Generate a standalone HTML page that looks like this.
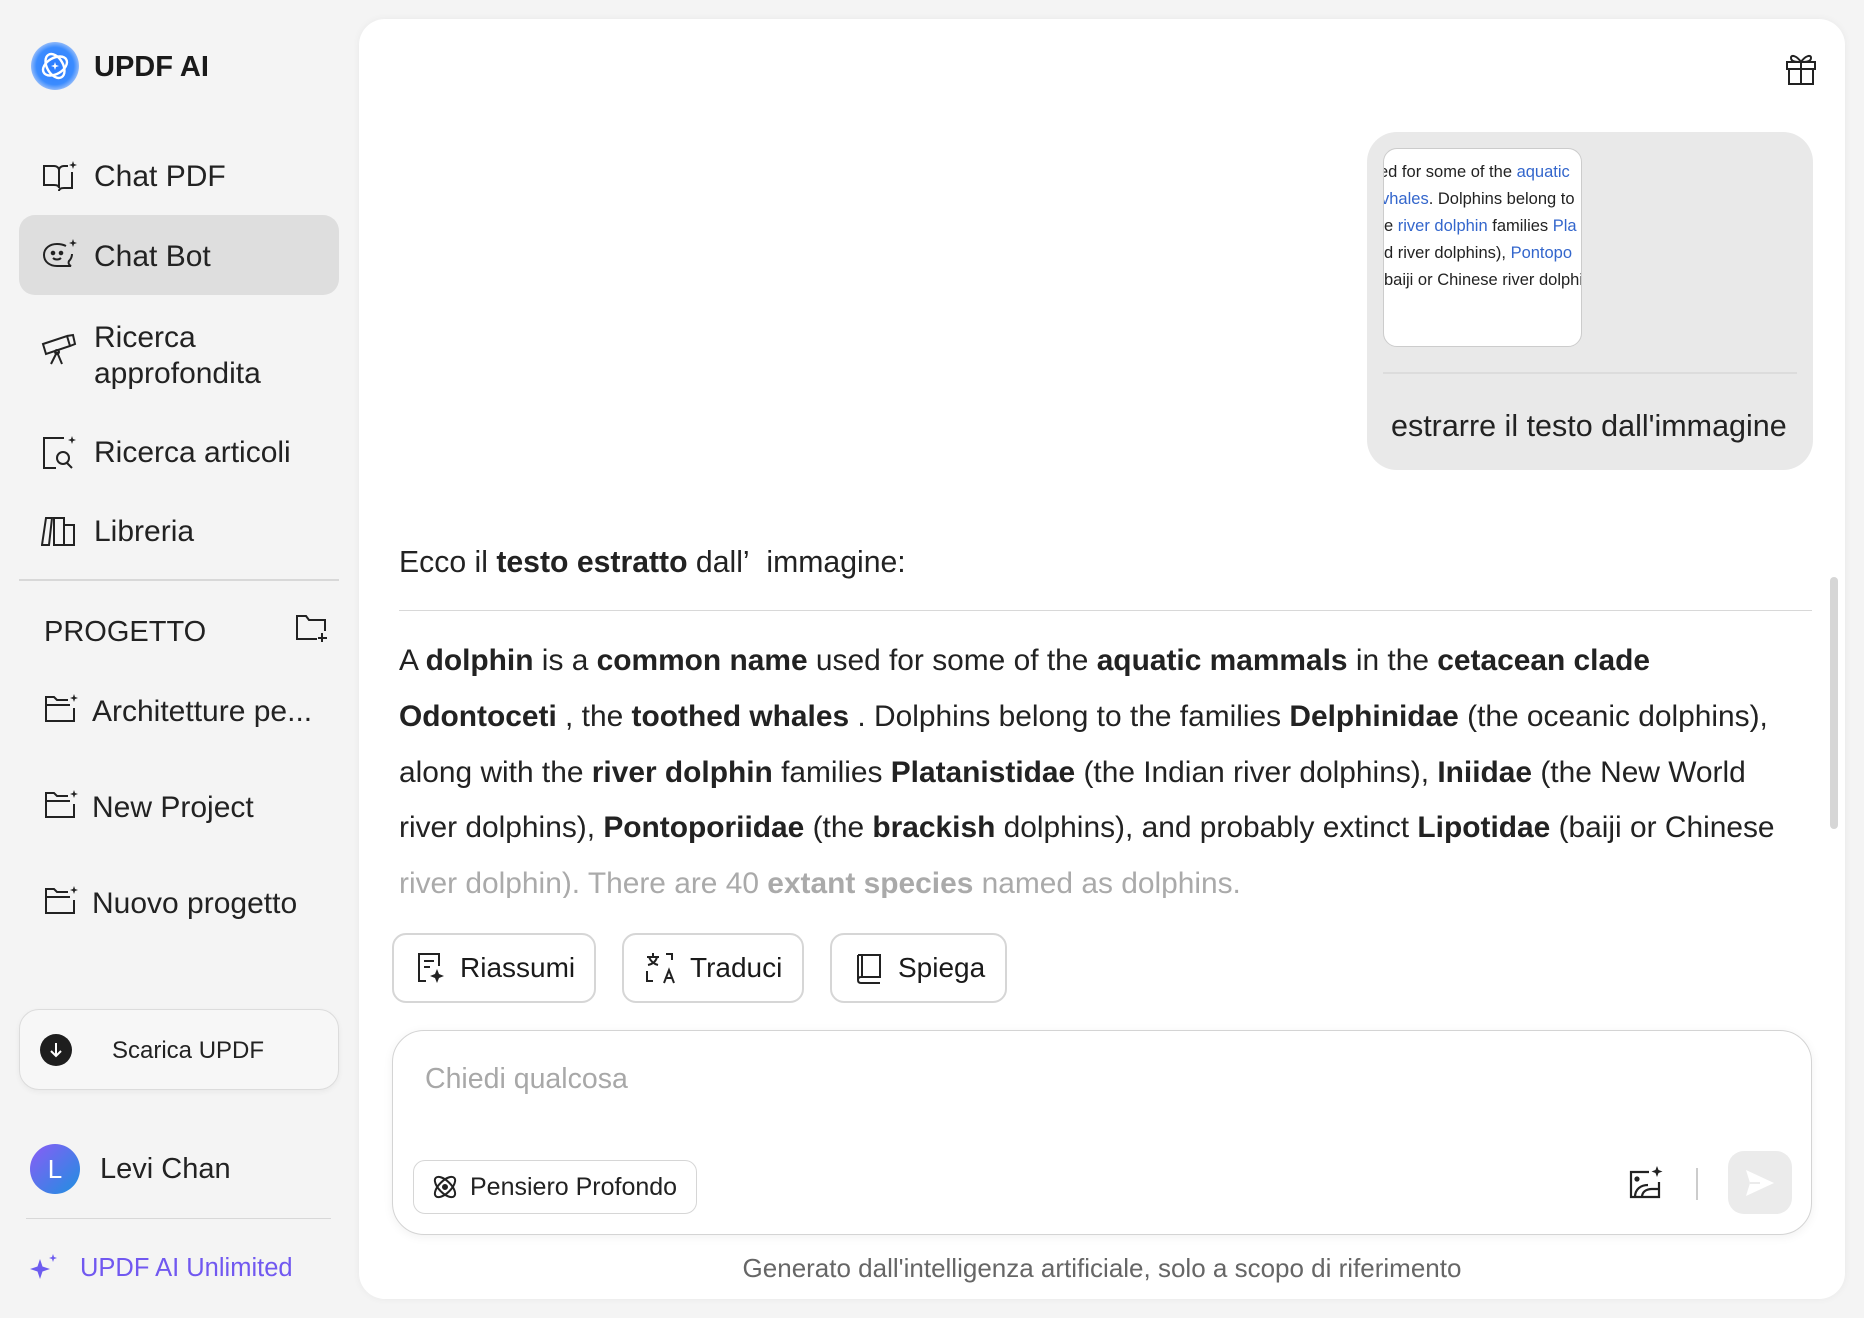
<!DOCTYPE html>
<html><head><meta charset="utf-8"><style>
*{box-sizing:border-box;margin:0;padding:0}
body{width:1864px;height:1318px;background:#f4f4f4;font-family:"Liberation Sans",sans-serif;color:#1a1a1a;position:relative;overflow:hidden}
.a{position:absolute;white-space:nowrap}
.nav{font-size:30px;color:#222}
.ic{position:absolute}
.main{position:absolute;left:359px;top:19px;width:1486px;height:1280px;background:#fff;border-radius:26px;box-shadow:0 0 8px rgba(0,0,0,.05)}
.btn{position:absolute;top:933px;height:70px;border:2px solid #d6d6d6;border-radius:14px;background:#fff;font-size:28px;display:flex;align-items:center;padding-left:20px;gap:12px}
p.t{position:absolute;left:399px;font-size:29.9px;line-height:56px;white-space:nowrap;color:#222}
b{font-weight:700}
</style></head><body>
<!-- logo -->
<div class="ic" style="left:31px;top:42px;width:48px;height:48px;border-radius:50%;background:radial-gradient(circle at 50% 50%,#2a7bff 0,#3b8cff 55%,rgba(80,140,255,.3) 80%,transparent 100%)"></div>
<svg class="ic" style="left:35px;top:46px" width="40" height="40" viewBox="0 0 40 40"><ellipse cx="20" cy="20" rx="13" ry="8" fill="none" stroke="#fff" stroke-width="2.4" transform="rotate(-30 20 20)"/><ellipse cx="20" cy="20" rx="13" ry="8" fill="none" stroke="#fff" stroke-width="2.4" transform="rotate(60 20 20)"/><path d="M20 16 L21 19 L24 20 L21 21 L20 24 L19 21 L16 20 L19 19Z" fill="#fff"/></svg>
<div class="a" style="left:94px;top:51px;font-size:29px;font-weight:700">UPDF AI</div>

<!-- nav -->
<div class="a" style="left:19px;top:215px;width:320px;height:80px;background:#dedede;border-radius:16px"></div>
<svg class="ic" style="left:42px;top:160px" width="36" height="32" viewBox="0 0 36 32" fill="none" stroke="#222" stroke-width="2"><path d="M2 6h10c3 0 5 2 5 4v18c0-2-2-3-5-3H2z M17 10c0-2 2-4 5-4h4 M30 12v16h-8c-3 0-5 1-5 3"/><path d="M31 1l1 3 3 1-3 1-1 3-1-3-3-1 3-1z" fill="#222" stroke="none"/></svg>
<div class="a nav" style="left:94px;top:160px">Chat PDF</div>
<svg class="ic" style="left:42px;top:238px" width="36" height="34" viewBox="0 0 36 34" fill="none" stroke="#222" stroke-width="2"><path d="M24 8c-2-1-5-2-9-2C8 6 2 10 2 17s6 11 13 11h14c-2-1-3-3-2-5 2-2 3-4 3-7"/><circle cx="11" cy="15" r="1.3" fill="#222"/><circle cx="19" cy="15" r="1.3" fill="#222"/><path d="M11 20c2 2 6 2 8 0"/><path d="M31 1l1 3 3 1-3 1-1 3-1-3-3-1 3-1z" fill="#222" stroke="none"/></svg>
<div class="a nav" style="left:94px;top:240px">Chat Bot</div>
<svg class="ic" style="left:40px;top:332px" width="38" height="40" viewBox="0 0 38 40" fill="none" stroke="#222" stroke-width="2"><path d="M3 12l24-8 3 10-24 8z M27 4l6-1 2 9-5 2"/><path d="M17 20l-6 12 M17 20l5 12"/><circle cx="17" cy="20" r="2"/></svg>
<div class="a nav" style="left:94px;top:320px;line-height:36px">Ricerca<br>approfondita</div>
<svg class="ic" style="left:42px;top:434px" width="36" height="36" viewBox="0 0 36 36" fill="none" stroke="#222" stroke-width="2"><path d="M22 4H2v30h12"/><circle cx="21" cy="24" r="6"/><path d="M25 29l5 5"/><path d="M30 2l1 3 3 1-3 1-1 3-1-3-3-1 3-1z" fill="#222" stroke="none"/></svg>
<div class="a nav" style="left:94px;top:436px">Ricerca articoli</div>
<svg class="ic" style="left:41px;top:516px" width="36" height="30" viewBox="0 0 36 30" fill="none" stroke="#222" stroke-width="2"><path d="M5 2h6l-3 27H1z M13 2h10v27H13z M23 9h10v20H23z"/></svg>
<div class="a nav" style="left:94px;top:515px">Libreria</div>
<div class="a" style="left:19px;top:579px;width:320px;height:2px;background:#d8d8d8"></div>

<div class="a" style="left:44px;top:616px;font-size:29px;color:#222">PROGETTO</div>
<svg class="ic" style="left:295px;top:614px" width="34" height="30" viewBox="0 0 34 30" fill="none" stroke="#222" stroke-width="2"><path d="M22 25H2V2h9l3 4h16v11"/><path d="M27 19v9 M23 24h9"/></svg>
<svg class="ic" style="left:44px;top:694px" width="34" height="30" viewBox="0 0 34 30" fill="none" stroke="#222" stroke-width="2"><path d="M24 6H13l-3-3H2v24h28V14 M2 11h24"/><path d="M30 0l1 3 3 1-3 1-1 3-1-3-3-1 3-1z" fill="#222" stroke="none"/></svg>
<div class="a nav" style="left:92px;top:695px">Architetture pe...</div>
<svg class="ic" style="left:44px;top:790px" width="34" height="30" viewBox="0 0 34 30" fill="none" stroke="#222" stroke-width="2"><path d="M24 6H13l-3-3H2v24h28V14 M2 11h24"/><path d="M30 0l1 3 3 1-3 1-1 3-1-3-3-1 3-1z" fill="#222" stroke="none"/></svg>
<div class="a nav" style="left:92px;top:791px">New Project</div>
<svg class="ic" style="left:44px;top:886px" width="34" height="30" viewBox="0 0 34 30" fill="none" stroke="#222" stroke-width="2"><path d="M24 6H13l-3-3H2v24h28V14 M2 11h24"/><path d="M30 0l1 3 3 1-3 1-1 3-1-3-3-1 3-1z" fill="#222" stroke="none"/></svg>
<div class="a nav" style="left:92px;top:887px">Nuovo progetto</div>

<div class="a" style="left:19px;top:1009px;width:320px;height:81px;border:1px solid #dcdcdc;border-radius:20px;background:#f7f7f7;box-shadow:0 2px 6px rgba(0,0,0,.05)"></div>
<div class="a" style="left:40px;top:1034px;width:32px;height:32px;border-radius:50%;background:#1e1e1e"></div>
<svg class="ic" style="left:40px;top:1034px" width="32" height="32" viewBox="0 0 32 32" fill="none" stroke="#fff" stroke-width="2"><path d="M16 9v13 M11 17l5 5 5-5"/></svg>
<div class="a" style="left:112px;top:1037px;font-size:24px;color:#222">Scarica UPDF</div>

<div class="a" style="left:30px;top:1144px;width:50px;height:50px;border-radius:50%;background:linear-gradient(135deg,#8a5cf6,#1e90e0);color:#fff;font-size:26px;text-align:center;line-height:50px">L</div>
<div class="a" style="left:100px;top:1153px;font-size:29px;color:#222">Levi Chan</div>
<div class="a" style="left:26px;top:1218px;width:305px;height:1px;background:#d8d8d8"></div>
<svg class="ic" style="left:29px;top:1253px" width="30" height="30" viewBox="0 0 30 30" fill="#6d5cf0"><path d="M11 6l2.5 7.5L21 16l-7.5 2.5L11 26l-2.5-7.5L1 16l7.5-2.5z"/><path d="M24 1l1 3 3 1-3 1-1 3-1-3-3-1 3-1z"/></svg>
<div class="a" style="left:80px;top:1254px;font-size:25.5px;color:#7158f0">UPDF AI Unlimited</div>

<!-- main -->
<div class="main"></div>
<svg class="ic" style="left:1784px;top:48px" width="34" height="38" viewBox="0 0 34 38" fill="none" stroke="#222" stroke-width="2"><path d="M3 14h28v7H3z M5 21v15h24V21 M17 14v22 M17 14c-4-6-10-8-10-4s6 4 10 4c4 0 10 0 10-4s-6-2-10 4"/></svg>

<div class="a" style="left:1367px;top:132px;width:446px;height:338px;background:#e9e9e9;border-radius:30px"></div>
<div class="a" style="left:1383px;top:148px;width:199px;height:199px;background:#fff;border:1px solid #ccc;border-radius:14px;overflow:hidden;font-size:16.5px;line-height:27px;color:#222;padding-top:10px">
<div style="margin-left:-5px">ed for some of the <span style="color:#3366cc">aquatic</span></div>
<div style="margin-left:-3px"><span style="color:#3366cc">vhales</span>. Dolphins belong to</div>
<div style="margin-left:0">e <span style="color:#3366cc">river dolphin</span> families <span style="color:#3366cc">Pla</span></div>
<div>d river dolphins), <span style="color:#3366cc">Pontopo</span></div>
<div>baiji or Chinese river dolphi</div>
</div>
<div class="a" style="left:1383px;top:372px;width:414px;height:2px;background:#dcdcdc"></div>
<div class="a" style="left:1391px;top:409px;font-size:30.5px;color:#222">estrarre il testo dall'immagine</div>

<div class="a" style="left:399px;top:546px;font-size:30.2px;color:#222">Ecco il <b>testo estratto</b> dall’&nbsp;&nbsp;immagine:</div>
<div class="a" style="left:399px;top:610px;width:1413px;height:1px;background:#d8d8d8"></div>
<p class="t" style="top:633px">A <b>dolphin</b> is a <b>common name</b> used for some of the <b>aquatic mammals</b> in the <b>cetacean clade</b></p>
<p class="t" style="top:689px"><b>Odontoceti</b> , the <b>toothed whales</b> . Dolphins belong to the families <b>Delphinidae</b> (the oceanic dolphins),</p>
<p class="t" style="top:745px">along with the <b>river dolphin</b> families <b>Platanistidae</b> (the Indian river dolphins), <b>Iniidae</b> (the New World</p>
<p class="t" style="top:800px">river dolphins), <b>Pontoporiidae</b> (the <b>brackish</b> dolphins), and probably extinct <b>Lipotidae</b> (baiji or Chinese</p>
<p class="t" style="top:856px;color:#aaa;height:42px;overflow:hidden">river dolphin). There are 40 <b>extant species</b> named as dolphins.</p>
<div class="a" style="left:1830px;top:577px;width:8px;height:252px;background:#d6d6d6;border-radius:4px"></div>

<div class="btn" style="left:392px;width:204px"><svg width="34" height="34" viewBox="0 0 34 34" fill="none" stroke="#222" stroke-width="2"><path d="M12 30H5V3h20v12 M10 10h10 M10 16h6"/><path d="M23 18l2 5 5 2-5 2-2 5-2-5-5-2 5-2z" fill="#222" stroke="none"/></svg>Riassumi</div>
<div class="btn" style="left:622px;width:182px"><svg width="34" height="34" viewBox="0 0 34 34" fill="none" stroke="#222" stroke-width="2"><path d="M3 6h12 M9 2v4 M5 6c2 5 5 7 9 8 M13 6c-1 4-4 7-9 8 M22 3h6v6 M3 20v10h6 M20 32l5-13 5 13 M22 27h6"/></svg>Traduci</div>
<div class="btn" style="left:830px;width:177px"><svg width="34" height="34" viewBox="0 0 34 34" fill="none" stroke="#222" stroke-width="2"><path d="M6 4h22v22H9c-2 0-3 1-3 3s1 3 3 3h19 M6 4v25 M10 4v22"/></svg>Spiega</div>

<div class="a" style="left:392px;top:1030px;width:1420px;height:205px;border:1.5px solid #d4d4d4;border-radius:32px;background:#fff;box-shadow:0 2px 10px rgba(0,0,0,.06)"></div>
<div class="a" style="left:425px;top:1063px;font-size:28.5px;color:#a8a8a8">Chiedi qualcosa</div>
<div class="a" style="left:413px;top:1160px;width:284px;height:54px;border:1.5px solid #d6d6d6;border-radius:12px;display:flex;align-items:center;padding-left:16px;gap:10px;font-size:25px;color:#222"><svg width="30" height="30" viewBox="0 0 30 30" fill="none" stroke="#222" stroke-width="2"><ellipse cx="15" cy="15" rx="13" ry="6" transform="rotate(45 15 15)"/><ellipse cx="15" cy="15" rx="13" ry="6" transform="rotate(-45 15 15)"/><circle cx="15" cy="15" r="2" fill="#222"/></svg>Pensiero Profondo</div>
<svg class="ic" style="left:1627px;top:1164px" width="36" height="36" viewBox="0 0 36 36" fill="none" stroke="#222" stroke-width="2.2"><path d="M22 8H4v25h28V18"/><circle cx="10" cy="15" r="1.5" fill="#222"/><path d="M8 33c0-8 6-12 13-12 M15 33c0-5 4-8 10-8h6"/><path d="M30 2l1.5 4 4 1.5-4 1.5-1.5 4-1.5-4-4-1.5 4-1.5z" fill="#222" stroke="none"/></svg>
<div class="a" style="left:1696px;top:1168px;width:2px;height:32px;background:#ccc"></div>
<div class="a" style="left:1728px;top:1151px;width:64px;height:63px;border-radius:16px;background:#ebebeb"></div>
<svg class="ic" style="left:1744px;top:1168px" width="32" height="30" viewBox="0 0 32 30"><path d="M2 2l28 13-28 13 4-13z" fill="#fff"/><path d="M6 15h10" stroke="#ebebeb" stroke-width="2"/></svg>

<div class="a" style="left:0;width:2204px;top:1253px;text-align:center;font-size:26px;color:#666">Generato dall'intelligenza artificiale, solo a scopo di riferimento</div>
</body></html>
